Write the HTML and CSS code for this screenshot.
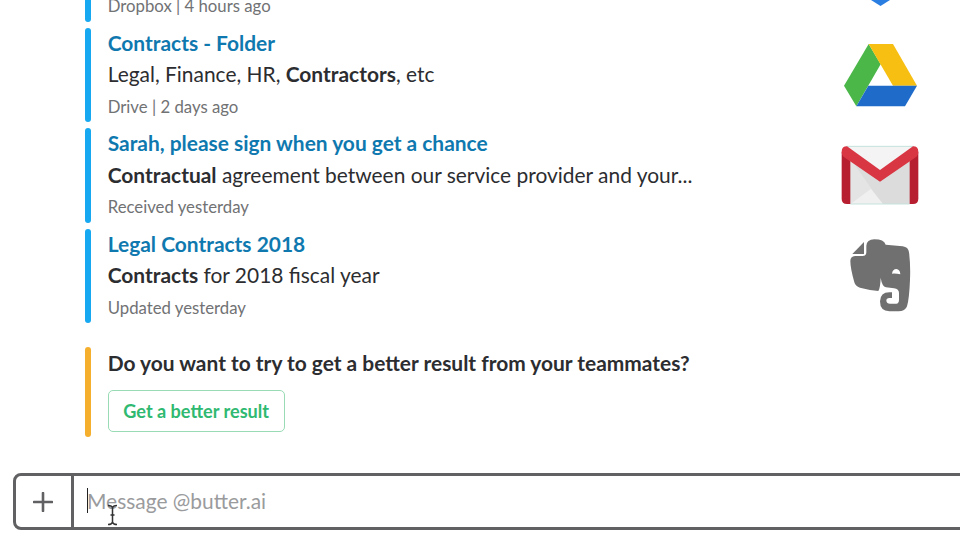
FILE: index.html
```html
<!DOCTYPE html>
<html lang="en">
<head>
  <meta charset="UTF-8" />
  <meta name="viewport" content="width=device-width, initial-scale=1.0"/>
  <title>butter.ai</title>
  <link rel="stylesheet" href="styles.css">
</head>
<body>

  <main class="messages">
    <div class="result result-cut">
      <div class="text">
        <div class="meta">Dropbox | 4 hours ago</div>
      </div>
      <div class="icon">
        <svg width="20" height="6" viewBox="0 0 20 6"><path d="M1 0h19l-9.500 6z" fill="#2a7de1"/></svg>
      </div>
    </div>

    <div class="result">
      <div class="text">
        <a class="title">Contracts - Folder</a>
        <div class="desc">Legal, Finance, HR, <b>Contractors</b>, etc</div>
        <div class="meta">Drive | 2 days ago</div>
      </div>
      <div class="icon">
        <svg width="73" height="64" viewBox="0 0 219 192">
          <path d="M74 3L110 64L37 190L0 128z" fill="#4bb749"/>
          <path d="M74 3H147L219 128H147z" fill="#f7bf12"/>
          <path d="M73 128H219L183 190H37z" fill="#1f6bc9"/>
        </svg>
      </div>
    </div>

    <div class="result">
      <div class="text">
        <a class="title">Sarah, please sign when you get a chance</a>
        <div class="desc"><b>Contractual</b> agreement between our service provider and your...</div>
        <div class="meta">Received yesterday</div>
      </div>
      <div class="icon">
        <svg width="78" height="60" viewBox="0 0 234 180">
          <path d="M16 4H218V177H16z" fill="#dcdcdc"/>
          <path d="M28 40L92 132L28 177z" fill="#e4e4e4"/>
          <path d="M28 177L90 131L126 177z" fill="#f0f0f0"/>
          <path d="M16 4H218L117 80z" fill="#f4f4f4"/>
          <path d="M16 4H218M28 177H206" stroke="#c5e3dc" stroke-width="3"/>
          <path d="M2 20L28 46V177H18Q2 177 2 161z" fill="#b71f30"/>
          <path d="M232 20L206 46V177H216Q232 177 232 161z" fill="#b71f30"/>
          <path d="M2 20Q2 4 18 4L117 75L216 4Q232 4 232 20Q232 32 222 38L117 110L12 38Q2 32 2 20z" fill="#d93644"/>
        </svg>
      </div>
    </div>

    <div class="result">
      <div class="text">
        <a class="title">Legal Contracts 2018</a>
        <div class="desc"><b>Contracts</b> for 2018 fiscal year</div>
        <div class="meta">Updated yesterday</div>
      </div>
      <div class="icon">
        <svg width="61" height="73" viewBox="60 28 183 219" fill="#707070">
          <path d="M67 73L102 37V73z"/>
          <path fill-rule="evenodd" d="M109 48Q110 30 133 29Q162 29 167 45L218 50Q235 52 237 68Q242 105 240 150Q238 205 231 230Q226 245 205 245H178Q150 244 150 215Q151 188 178 188H186V205H178Q169 206 169 213Q170 222 180 222H199Q207 221 207 210V190Q207 178 192 176L168 173Q156 170 152 144Q151 175 145 184Q120 182 90 174Q76 170 73 158Q61 115 61 94Q61 80 75 79H98Q109 79 109 68zM186 132Q188 118 199 118Q210 119 211 134Q198 131 186 132z"/>
        </svg>
      </div>
    </div>

    <div class="prompt">
      <div class="question">Do you want to try to get a better result from your teammates?</div>
      <button class="better">Get a better result</button>
    </div>
  </main>

  <footer class="composer">
    <div class="plus">
      <svg width="20" height="20" viewBox="0 0 20 20"><path d="M10 1v18M1 10h18" stroke="#616163" stroke-width="2.600" stroke-linecap="round"/></svg>
    </div>
    <div class="field">
      <span class="placeholder">Message @butter.ai</span>
      <svg class="pointer" width="11" height="22" viewBox="0 0 11 22"><path d="M1 1.500q4 0 4.500 2.500q.5-2.500 4.500-2.500M1 20.500q4 0 4.500-2.500q.5 2.500 4.500 2.500M5.500 3v16M3.500 11h4" fill="none" stroke="#333" stroke-width="1.500"/></svg>
    </div>
  </footer>

</body>
</html>
```
FILE: styles.css
```css
body {
  margin: 0;
  height: 540px;
  overflow: hidden;
  background: #fff;
  color: #2c2d30;
  font-family: Lato, sans-serif;
  font-size: 20.93px;
}
.messages {
  height: 473px;
  padding-left: 85px;
}
.result, .prompt {
  position: relative;
  display: flex;
  padding-left: 22.7px;
}
.result {
  height: 94.5px;
  margin-bottom: 6px;
  justify-content: space-between;
}
.result::before, .prompt::before {
  content: "";
  position: absolute;
  left: 0;
  top: 0;
  bottom: 0;
  width: 6px;
  border-radius: 3px;
  background: #16a8f0;
}
.result-cut {
  height: 21.7px;
  align-items: flex-end;
}
.result-cut::before {
  border-radius: 0 0 3px 3px;
}
.result-cut .icon {
  height: 22px;
  align-items: flex-start;
}
.title, .desc, .meta {
  display: block;
  white-space: nowrap;
  line-height: 31px;
}
.title {
  color: #0f79af;
  font-weight: bold;
  line-height: 30.5px;
}
.meta {
  padding-top: 1.5px;
  color: #717274;
  font-size: 16.75px;
  line-height: 32px;
}
.icon {
  display: flex;
  align-items: center;
  justify-content: center;
  width: 80px;
  margin-right: 40px;
}
.prompt {
  flex-direction: column;
  align-items: flex-start;
  height: 90px;
  margin-top: 24px;
}
.prompt::before {
  background: #f6ae2d;
}
.question {
  font-weight: bold;
  line-height: 32px;
}
.better {
  box-sizing: border-box;
  width: 177px;
  height: 42px;
  margin-top: 11px;
  padding: 0;
  border: 1.5px solid #98dbb4;
  border-radius: 5px;
  background: #fff;
  color: #2fb971;
  font: bold 18.1px Lato, sans-serif;
}
.composer {
  display: flex;
  box-sizing: border-box;
  height: 57px;
  margin: 0 -10px 0 13px;
  border: 3px solid #616163;
  border-radius: 8px;
}
.plus {
  display: flex;
  align-items: center;
  justify-content: center;
  box-sizing: border-box;
  width: 58px;
  padding-right: 1px;
  border-right: 3px solid #616163;
}
.field {
  position: relative;
  display: flex;
  align-items: center;
  padding-left: 13px;
}
.placeholder {
  margin-bottom: 2px;
  color: #9a9b9d;
  line-height: 25px;
  border-left: 1px solid #222;
  text-indent: -1px;
  display: block;
}
.pointer {
  position: absolute;
  left: 33px;
  top: 28px;
}
```
